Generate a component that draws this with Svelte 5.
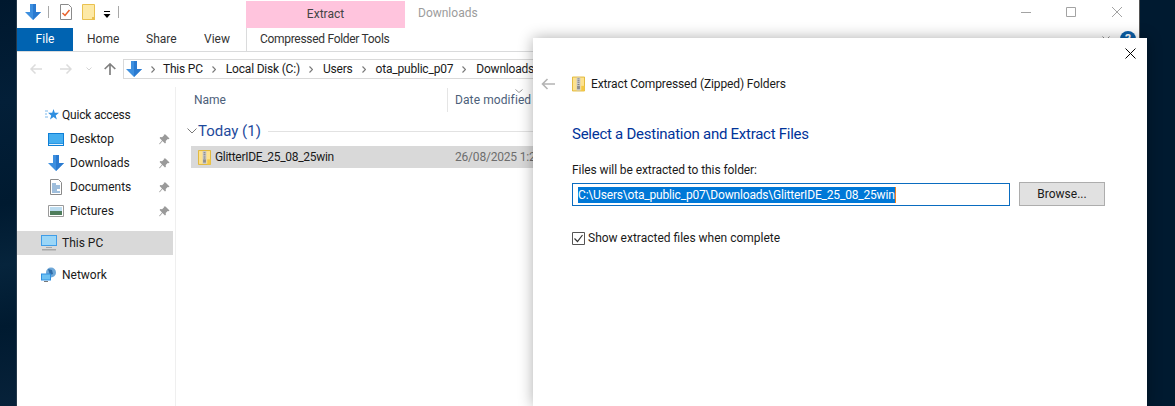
<script>
  const tabs = [
    { label: 'Home', w: 59 },
    { label: 'Share', w: 58 },
    { label: 'View', w: 56 }
  ];
  const crumbs = ['This PC', 'Local Disk (C:)', 'Users', 'ota_public_p07', 'Downloads'];
  const quick = [
    { label: 'Desktop', icon: 'desktop' },
    { label: 'Downloads', icon: 'down' },
    { label: 'Documents', icon: 'doc' },
    { label: 'Pictures', icon: 'pic' }
  ];
</script>

{#snippet zip(w, h)}
  <svg width={w} height={h} viewBox="0 0 14 16">
    <path d="M.5.500h13v15H.5z" fill="#fde28f" stroke="#e0b431" />
    <path d="M5 1h4v14H5z" fill="#c9c9c9" />
    <path d="M6 2h2v1H6zM6 4h2v1H6zM6 6h2v1H6zM6 8h2v1H6z" fill="#7d7d7d" />
    <path d="M5.500 10h3v3.500h-3z" fill="#8c8c8c" />
    <path d="M10 10h3.500v5.500H10z" fill="#f3c845" />
  </svg>
{/snippet}

{#snippet downArrow(w, h)}
  <svg width={w} height={h} viewBox="0 0 16 16">
    <path d="M5 0h6v8h5l-8 8-8-8h5z" fill="#3d8fdf" />
    <path d="M8 0h3v8h5l-8 8z" fill="#2a7ad0" />
  </svg>
{/snippet}

{#snippet pin()}
  <svg class="pin" width="11" height="11" viewBox="0 0 11 11">
    <path d="M6.500.5l4 4-1 .8-.8-.3-2 2 .2 1.800-.9.700L3.500 7 .8 10.200 0 10l3-3.500L.6 4l.7-.9 1.800.2 2-2-.3-.8z" fill="#9a9a9a" />
  </svg>
{/snippet}

<div class="desktop">
  <div class="edge"></div>
  <div class="explorer">
    <div class="titlebar">
      <div class="qat">
        <span class="qa-down">{@render downArrow(16, 16)}</span>
        <span class="vsep"></span>
        <svg class="qa-check" width="12" height="16" viewBox="0 0 12 16">
          <path d="M.5.500h8l3 3v12H.5z" fill="#fff" stroke="#8a8a8a" />
          <path d="M2.500 9l2.500 2.500L9.500 6" fill="none" stroke="#e8622c" stroke-width="1.500" />
        </svg>
        <svg class="qa-folder" width="13" height="16" viewBox="0 0 13 16">
          <path d="M.5.500h12v15H.5z" fill="#fde9a6" stroke="#eac14f" />
          <path d="M10 13h3v3h-3z" fill="#eac14f" />
        </svg>
        <svg class="qa-drop" width="8" height="8" viewBox="0 0 8 8">
          <path d="M1 0h6v1H1zM.5 3h7L4 7z" fill="#000" />
        </svg>
        <span class="vsep last"></span>
      </div>
      <div class="context">Extract</div>
      <div class="wintitle">Downloads</div>
      <div class="controls">
        <svg width="10" height="10" viewBox="0 0 10 10"><path d="M0 5.500h10" stroke="#a3a3a3" /></svg>
        <svg width="10" height="10" viewBox="0 0 10 10"><path d="M.5.500h9v9h-9z" fill="none" stroke="#a3a3a3" /></svg>
        <svg width="10" height="10" viewBox="0 0 10 10"><path d="M0 0l10 10M10 0L0 10" stroke="#a3a3a3" /></svg>
      </div>
    </div>

    <div class="ribbon">
      <div class="file">File</div>
      {#each tabs as t}
        <div class="tab" style:width="{t.w}px">{t.label}</div>
      {/each}
      <div class="ctx-tab">Compressed Folder Tools</div>
      <div class="help-wrap">
        <svg width="8" height="5" viewBox="0 0 8 5"><path d="M.5.500L4 4 7.500.500" fill="none" stroke="#8a8a8a" /></svg>
        <span class="help">?</span>
      </div>
    </div>

    <div class="addr">
      <div class="nav">
        <svg width="12" height="10" viewBox="0 0 12 10"><path d="M12 5H1M5.500.500L1 5l4.500 4.500" fill="none" stroke="#dcdcdc" stroke-width="1.500" /></svg>
        <svg class="fwd" width="12" height="10" viewBox="0 0 12 10"><path d="M0 5h11M6.500.500L11 5 6.500 9.500" fill="none" stroke="#dcdcdc" stroke-width="1.500" /></svg>
        <svg class="dd" width="6" height="4" viewBox="0 0 6 4"><path d="M.5.500L3 3 5.500.500" fill="none" stroke="#d4d4d4" /></svg>
        <svg class="up" width="12" height="12" viewBox="0 0 12 12"><path d="M6 12V1M.7 6L6 1l5.300 5" fill="none" stroke="#808080" stroke-width="1.700" /></svg>
      </div>
      <div class="pathbox">
        <span class="path-icon">{@render downArrow(16, 16)}</span>
        {#each crumbs as c, i}
          <svg class="chev" class:first={i === 0} width="4" height="7" viewBox="0 0 4 7"><path d="M.5.500L3.500 3.500.5 6.500" fill="none" stroke="#7a7a7a" stroke-width="1.200" /></svg>
          <span class="crumb">{c}</span>
        {/each}
      </div>
    </div>

    <div class="body">
      <nav class="side">
        <div class="side-row head">
          <svg width="14" height="12" viewBox="0 0 14 12">
            <path d="M8.500 0l1.300 3.800H14l-3.300 2.600 1.200 4.100-3.400-2.500L5 10.500l1.200-4.100L3 3.800h4.200z" fill="#2f8fe0" />
            <path d="M0 2h3M0 5h2M0 8h3" stroke="#7db9ec" />
          </svg>
          <span class="qa-label">Quick access</span>
        </div>
        {#each quick as q}
          <div class="side-row child">
            <span class="side-ico">
              {#if q.icon === 'desktop'}
                <svg width="16" height="13" viewBox="0 0 16 13"><path d="M0 0h16v13H0z" fill="#0f7fd6" /><path d="M1 1h14v9.500H1z" fill="#44aef0" /><path d="M1 11h14v1H1z" fill="#e5f3fc" /></svg>
              {:else if q.icon === 'down'}
                {@render downArrow(16, 16)}
              {:else if q.icon === 'doc'}
                <svg class="doc" width="12" height="16" viewBox="0 0 12 16"><path d="M.5.500h8l3 3v12H.5z" fill="#fff" stroke="#8a8a8a" /><path d="M2 5h4M2 7h8M2 9h8M2 11h5M2 13h8" stroke="#3f7cb8" /></svg>
              {:else}
                <svg width="16" height="12" viewBox="0 0 16 12"><path d="M.5.500h15v11H.5z" fill="#fff" stroke="#9a9a9a" /><path d="M2 2h12v4H2z" fill="#bcdcf0" /><path d="M2 6h12v4H2z" fill="#4f7d5c" /></svg>
              {/if}
            </span>
            <span class="side-label">{q.label}</span>
            {@render pin()}
          </div>
        {/each}
        <div class="side-row head pc">
          <svg width="16" height="16" viewBox="0 0 16 16"><path d="M0 0h16v11H0z" fill="#3f9de8" /><path d="M1 1h14v9H1z" fill="#9bd6f7" /><path d="M5 12h6v1H5zM1 14h14v1.500H1z" fill="#a8a8a8" /></svg>
          <span>This PC</span>
        </div>
        <div class="side-row head net">
          <svg width="16" height="16" viewBox="0 0 16 16"><circle cx="10" cy="5.500" r="5" fill="#6fa8d8" /><path d="M7 2l4 1 1 4-3 1z" fill="#2f6ca8" /><path d="M0 6.500h10v7H0z" fill="#2e8fe0" /><path d="M1 7.500h8v5H1z" fill="#6cc0f2" /><path d="M3 14.500h4" stroke="#777" /></svg>
          <span>Network</span>
        </div>
      </nav>

      <section class="files">
        <div class="cols">
          <div class="col name">Name</div>
          <div class="col date">
            <svg class="sort" width="8" height="4" viewBox="0 0 8 4"><path d="M.5.500L4 3.500 7.500.500" fill="none" stroke="#9a9a9a" /></svg>
            Date modified
          </div>
        </div>
        <div class="group">
          <svg width="10" height="6" viewBox="0 0 10 6"><path d="M.5.500L5 5 9.500.500" fill="none" stroke="#7a7a7a" /></svg>
          <span class="group-name">Today (1)</span>
          <span class="group-line"></span>
        </div>
        <div class="file-row">
          <span class="file-name">{@render zip(13, 17)}<span class="fname">GlitterIDE_25_08_25win</span></span>
          <span class="file-date">26/08/2025 1:26</span>
        </div>
      </section>
    </div>
  </div>

  <div class="dialog">
    <svg class="dlg-close" width="11" height="11" viewBox="0 0 11 11"><path d="M.5.500l10 10M10.500.500l-10 10" stroke="#000" /></svg>
    <header class="dlg-head">
      <svg class="dlg-back" width="14" height="12" viewBox="0 0 14 12"><path d="M14 6H1.500M6.500 1L1.500 6l5 5" fill="none" stroke="#b4b4b4" stroke-width="1.600" /></svg>
      {@render zip(13, 16)}
      <span class="dlg-title">Extract Compressed (Zipped) Folders</span>
    </header>
    <h2>Select a Destination and Extract Files</h2>
    <div class="lbl">Files will be extracted to this folder:</div>
    <div class="pick">
      <div class="input"><span class="sel">C:\Users\ota_public_p07\Downloads\GlitterIDE_25_08_25win</span><i class="caret"></i></div>
      <div class="browse">Browse...</div>
    </div>
    <label class="check">
      <svg width="13" height="13" viewBox="0 0 13 13"><path d="M.5.500h12v12H.5z" fill="#fff" stroke="#555" /><path d="M2.500 6.500l3 3 5-6.500" fill="none" stroke="#333" stroke-width="1.200" /></svg>
      <span>Show extracted files when complete</span>
    </label>
  </div>
</div>

<style>
  :global(body) { margin: 0; background: #001a30; }
  .desktop {
    position: relative;
    display: flex;
    width: 1175px;
    height: 406px;
    overflow: hidden;
    background: #001a30;
    font: 12px/16px Roboto, "Open Sans", sans-serif;
    color: #1a1a1a;
  }
  svg { display: block; flex: none; }
  .edge {
    width: 17px;
    flex: none;
    box-sizing: border-box;
    border-right: 1px solid #24384a;
    background: linear-gradient(170deg, #00182e 0%, #031f38 25%, #001a30 50%, #06243c 65%, #001a30 80%, #07223a 100%);
  }
  .explorer {
    width: 1123px;
    flex: none;
    background: #fff;
    border-right: 1px solid #555;
    box-sizing: border-box;
    display: flex;
    flex-direction: column;
  }
  .titlebar { display: flex; height: 28px; flex: none; position: relative; }
  .qat { display: flex; align-items: flex-start; width: 229px; flex: none; padding-top: 4px; box-sizing: border-box; }
  .qa-down { margin-left: 8px; }
  .vsep { width: 1px; height: 12px; background: #a8a8a8; margin: 2px 0 0 7px; }
  .vsep.last { margin-left: 7px; }
  .qa-check { margin-left: 11px; }
  .qa-folder { margin-left: 10px; }
  .qa-drop { margin: 7px 0 0 8px; }
  .context {
    width: 159px;
    margin-top: 1px;
    background: #ffc4dd;
    text-align: center;
    line-height: 27px;
    color: #444;
  }
  .wintitle { margin-left: 13px; line-height: 27px; color: #9c9c9c; }
  .controls { margin-left: auto; display: flex; gap: 35px; padding: 7px 17px 0 0; }
  .controls svg:last-child { margin-left: 1px; }

  .ribbon { display: flex; height: 24px; flex: none; border-bottom: 1px solid #dadbdc; box-sizing: border-box; position: relative; }
  .file { width: 56px; height: 23px; background: #0063b1; color: #fff; text-align: center; line-height: 23px; }
  .tab { padding-left: 14px; box-sizing: border-box; line-height: 23px; color: #333; }
  .ctx-tab { border-left: 1px solid #dadbdc; padding-left: 13px; width: 159px; line-height: 23px; color: #333; box-sizing: border-box; white-space: nowrap; letter-spacing: -0.3px; }
  .help-wrap { margin-left: auto; display: flex; align-items: flex-start; gap: 10px; padding: 8px 3px 0 0; }
  .help { width: 16px; height: 16px; border-radius: 50%; background: #0a5fa8; color: #fff; font-weight: 700; text-align: center; line-height: 16px; margin-top: -5px; }

  .addr { display: flex; flex: none; height: 35px; padding-top: 7px; box-sizing: border-box; }
  .nav { width: 106px; flex: none; display: flex; align-items: center; height: 20px; padding-left: 13px; box-sizing: border-box; }
  .fwd { margin-left: 18px; }
  .dd { margin-left: 14px; }
  .up { margin-left: 12px; }
  .pathbox { flex: 1; height: 20px; border: 1px solid #d9d9d9; box-sizing: border-box; display: flex; align-items: center; white-space: nowrap; }
  .path-icon { margin-left: 2px; }
  .chev { margin: 0 10px 0 9px; }
  .chev.first { margin-right: 8px; }
  .crumb { color: #1a1a1a; letter-spacing: -0.2px; }

  .body { display: flex; flex: 1; min-height: 0; }
  .side { width: 158px; flex: none; border-right: 1px solid #efefef; padding-top: 16px; }
  .side-row { display: flex; align-items: center; height: 24px; white-space: nowrap; }
  .side-row.head { padding-left: 27px; width: 156px; box-sizing: border-box; gap: 7px; }
  .side-row.head:first-child { padding-left: 28px; gap: 3px; }
  .side-row.child { padding-left: 31px; width: 156px; box-sizing: border-box; }
  .side-row.head.pc, .side-row.head.net { padding-left: 24px; gap: 5px; }
  .side-row.pc { background: #d9d9d9; margin-top: 8px; }
  .side-row.net { margin-top: 8px; }
  .side-ico { width: 22px; flex: none; display: flex; }
  .doc { margin-left: 2px; }
  .side-label { flex: 1; }
  .qa-label { letter-spacing: -0.2px; }
  .pin { margin-right: 3px; }

  .files { flex: 1; padding-left: 10px; min-width: 0; position: relative; }
  .cols { display: flex; height: 24px; margin-top: 1px; color: #4c607a; line-height: 24px; }
  .col.name { width: 262px; padding-left: 8px; box-sizing: border-box; border-right: 1px solid #e5e5e5; }
  .col.date { padding-left: 7px; position: relative; white-space: nowrap; letter-spacing: 0.1px; }
  .sort { position: absolute; left: 67px; top: 1px; }
  .group { display: flex; align-items: center; height: 22px; margin-top: 8px; }
  .group svg { margin-left: 1px; }
  .group-name { font-size: 15px; color: #1e4a9c; margin-left: 1px; white-space: nowrap; }
  .group-line { flex: 1; height: 1px; background: #e2e2e2; margin-left: 7px; }
  .file-row { display: flex; align-items: center; height: 22px; margin: 4px 0 0 5px; background: #d9d9d9; white-space: nowrap; }
  .file-name { width: 264px; flex: none; display: flex; align-items: center; gap: 4px; padding-left: 7px; box-sizing: border-box; }
  .fname { letter-spacing: -0.3px; }
  .file-date { color: #6d6d6d; letter-spacing: -0.2px; }

  .dialog {
    position: absolute;
    left: 533px;
    top: 38px;
    width: 614px;
    height: 368px;
    box-sizing: border-box;
    background: #fff;
    box-shadow: 0 0 14px rgba(0, 0, 0, 0.32);
    padding: 38px 0 0 39px;
  }
  .dlg-close { position: absolute; right: 11px; top: 10px; }
  .dlg-head { display: flex; align-items: center; height: 16px; }
  .dlg-back { margin: 0 17px 0 -31px; }
  .dlg-title { margin-left: 6px; white-space: nowrap; letter-spacing: -0.11px; }
  h2 { margin: 32px 0 0; font: 400 15px/20px Roboto, "Open Sans", sans-serif; color: #003399; white-space: nowrap; letter-spacing: -0.26px; }
  .lbl { margin-top: 18px; line-height: 16px; white-space: nowrap; letter-spacing: -0.08px; }
  .pick { display: flex; align-items: flex-start; margin-top: 4px; gap: 9px; }
  .input { width: 438px; height: 23px; margin-top: 1px; border: 1px solid #0a6cc0; box-sizing: border-box; padding-left: 5px; display: flex; align-items: center; white-space: nowrap; }
  .sel { background: #0078d7; color: #fff; line-height: 16px; letter-spacing: -0.18px; }
  .caret { width: 1px; height: 16px; background: #f08020; }
  .browse { width: 86px; height: 24px; background: #e1e1e1; border: 1px solid #adadad; box-sizing: border-box; text-align: center; line-height: 22px; }
  .check { display: flex; align-items: center; gap: 3px; margin-top: 24px; white-space: nowrap; }
</style>
